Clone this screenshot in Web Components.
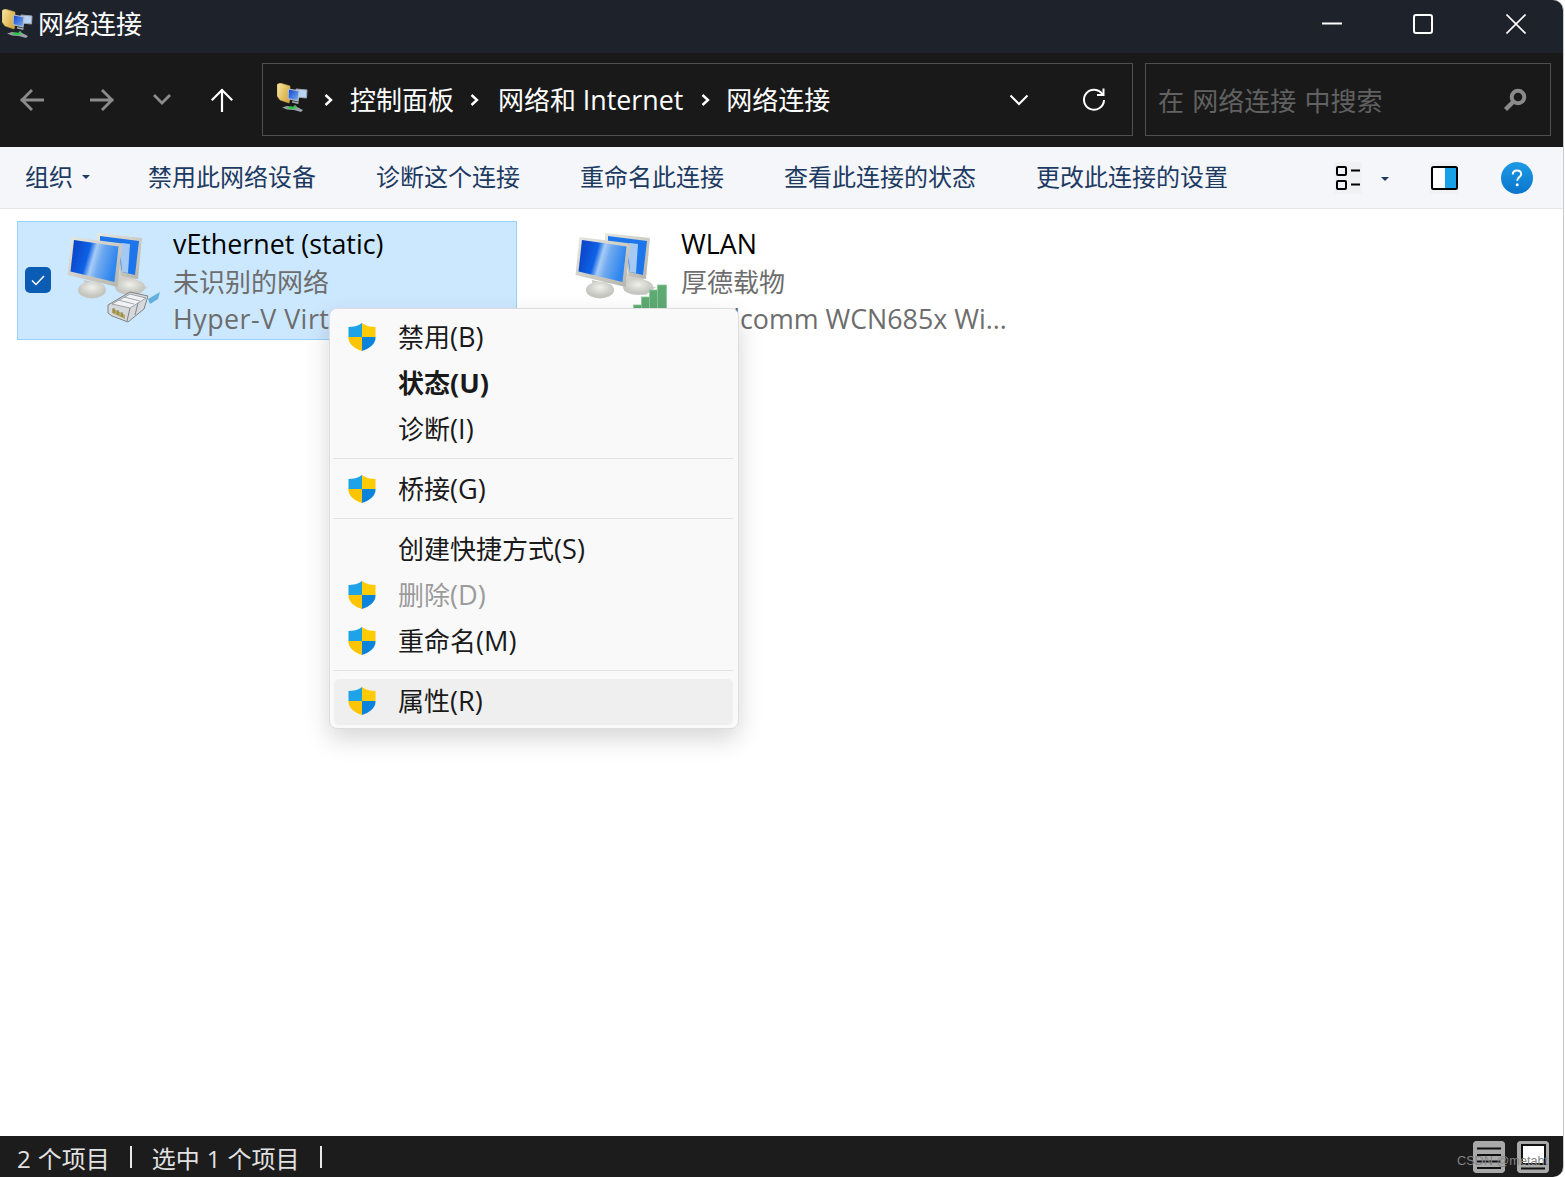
<!DOCTYPE html>
<html lang="zh-CN">
<head>
<meta charset="utf-8">
<title>网络连接</title>
<style>
html,body{margin:0;padding:0;background:#fff;height:100%;overflow:hidden}
body{font-family:"Open Sans","Noto Sans CJK SC",sans-serif}
</style>
</head>
<body>
<explorer-window>
  <title-bar slot="title"></title-bar>
  <nav-bar slot="nav"></nav-bar>
  <tool-bar slot="tools"></tool-bar>
  <file-area slot="files">
    <net-item name="vEthernet (static)" status="未识别的网络" device="Hyper-V Virtual Ethernet Adapter" selected kind="wired"></net-item>
    <net-item name="WLAN" status="厚德载物" device="Qualcomm WCN685x Wi..." kind="wifi"></net-item>
  </file-area>
  <status-bar slot="status"></status-bar>
  <context-menu slot="menu">
    <menu-row shield label="禁用" key="(B)"></menu-row>
    <menu-row bold label="状态" key="(U)"></menu-row>
    <menu-row label="诊断" key="(I)"></menu-row>
    <menu-sep></menu-sep>
    <menu-row shield label="桥接" key="(G)"></menu-row>
    <menu-sep></menu-sep>
    <menu-row label="创建快捷方式" key="(S)"></menu-row>
    <menu-row shield disabled label="删除" key="(D)"></menu-row>
    <menu-row shield label="重命名" key="(M)"></menu-row>
    <menu-sep></menu-sep>
    <menu-row shield active label="属性" key="(R)"></menu-row>
  </context-menu>
</explorer-window>
<script>
const FONT='"Open Sans","Noto Sans CJK SC",sans-serif';
function def(name,html){
  customElements.define(name,class extends HTMLElement{
    constructor(){super();this.attachShadow({mode:'open'})}
    connectedCallback(){this.shadowRoot.innerHTML=typeof html==='function'?html(this):html}
  });
}
def('explorer-window',`<style>
:host{display:flex;flex-direction:column;position:relative;width:1563px;height:1177px;overflow:hidden;border-radius:0 10px 10px 0;box-shadow:1px 0 0 #c9c9c9;font-family:${FONT}}
main{flex:1;min-height:0;display:flex;flex-direction:column}
</style><slot name="title"></slot><slot name="nav"></slot><slot name="tools"></slot><main><slot name="files"></slot></main><slot name="status"></slot><slot name="menu"></slot>`);

def('cp-icon',`<style>:host{display:block;width:31px;height:30px}svg{display:block}</style>
<svg width="31" height="30" viewBox="0 0 31 30">
<defs><linearGradient id="f" x1="0" x2="1" y1="0" y2=".6"><stop offset="0" stop-color="#f8e9a6"/><stop offset="1" stop-color="#d8a93e"/></linearGradient>
<linearGradient id="s" x1="0" x2="1" y1="0" y2="1"><stop offset="0" stop-color="#0b3fd0"/><stop offset="1" stop-color="#7cb4f0"/></linearGradient></defs>
<path d="M0 1.500 3 0 13 3V16L12 20 3 17 0 13Z" fill="url(#f)" stroke="#c9a550" stroke-width=".6"/>
<path d="M19 6 30 7 29.500 15 19 14Z" fill="#b9d4f2" stroke="#9aa4b0"/>
<path d="M11.500 6 22 8 21 18 11 15.500Z" fill="url(#s)" stroke="#b7bec6" stroke-width="1.200"/>
<path d="M15 18 22 19.500 21 21 15 19.500Z" fill="#a9b0b8"/>
<path d="M5 24.500 10 23 16 24 18 22 20 24 26 27 24 29 17 27 10 26.500Z" fill="#9aa2a8"/>
<path d="M9 24.800 14 23.500 17 24 19 22.300 19.500 25 15 26.300Z" fill="#27c93f"/>
</svg>`);

def('title-bar',`<style>
:host{display:flex;align-items:center;height:53px;background:#1e222b;color:#fff;font-size:26px;flex:none}
.ic{margin:-6px 5px 0 2px;display:flex}
.t{flex:1;line-height:53px;margin-top:-5px}
.b{width:20px;height:20px;display:block;flex:none;margin-top:-5px}
svg{display:block;fill:none;stroke:#fff}
.gap1{margin-right:71px}.gap2{margin-right:73px}.gap3{margin-right:37px}
</style>
<div class="ic"><cp-icon></cp-icon></div><div class="t">网络连接</div>
<svg class="b gap1" viewBox="0 0 20 20"><path d="M0 9.500H20" stroke-width="2"/></svg>
<svg class="b gap2" viewBox="0 0 20 20"><rect x="1" y="1" width="18" height="18" rx="2" stroke-width="2"/></svg>
<svg class="b gap3" viewBox="0 0 20 20"><path d="M.5 .5 19.500 19.500M19.500 .5 .5 19.500" stroke-width="1.600"/></svg>`);

def('nav-bar',`<style>
:host{display:flex;height:94px;box-sizing:border-box;padding:10px 12px 11px 0;background:#191919;flex:none;align-items:stretch;color:#fff;font-size:26px}
.arrows{width:262px;position:relative;display:flex;align-items:center;flex:none}
.arrows svg{display:block;flex:none;fill:none;stroke-linecap:square}
.addr{width:871px;box-sizing:border-box;border:1px solid #4f4f4f;display:flex;align-items:center;padding-left:14px;flex:none}
.addr cp-icon{margin-top:-4px}
.addr span{white-space:nowrap;line-height:30px}
.lat{font-size:26.800px}
.chev{display:block;fill:none;stroke:#fff;flex:none}
.search{width:406px;margin-left:12px;box-sizing:border-box;border:1px solid #4f4f4f;display:flex;align-items:center;padding:0 23px 0 13px;color:#616161}
.search span{flex:1;word-spacing:1.500px;margin-left:-1px}
</style>
<div class="arrows">
<svg width="24" height="22" viewBox="0 0 24 22" style="margin-left:20px" stroke="#8c8c8c" stroke-width="2.800"><path d="M23 11H2M11 2 2 11 11 20"/></svg>
<svg width="24" height="22" viewBox="0 0 24 22" style="margin-left:46px" stroke="#8c8c8c" stroke-width="2.800"><path d="M1 11H22M13 2 22 11 13 20"/></svg>
<svg width="18" height="12" viewBox="0 0 18 12" style="margin-left:39px" stroke="#8c8c8c" stroke-width="2.800"><path d="M2 2 9 9 16 2"/></svg>
<svg width="22" height="24" viewBox="0 0 22 24" style="margin-left:40px" stroke="#fff" stroke-width="2.200"><path d="M11 23V2M1.500 11.500 11 2 20.500 11.500"/></svg>
</div>
<div class="addr">
<cp-icon></cp-icon>
<svg class="chev" width="9" height="14" viewBox="0 0 9 14" style="margin:0 17px 0 16px" stroke-width="2.400"><path d="M1.500 2 7 7 1.500 12"/></svg>
<span>控制面板</span>
<svg class="chev" width="9" height="14" viewBox="0 0 9 14" style="margin:0 19px 0 16px" stroke-width="2.400"><path d="M1.500 2 7 7 1.500 12"/></svg>
<span>网络和 <span class="lat">Internet</span></span>
<svg class="chev" width="9" height="14" viewBox="0 0 9 14" style="margin:0 16px 0 18px" stroke-width="2.400"><path d="M1.500 2 7 7 1.500 12"/></svg>
<span style="flex:1">网络连接</span>
<svg class="chev" width="20" height="12" viewBox="0 0 20 12" style="margin-right:52px" stroke-width="2"><path d="M1.500 1.500 10 10 18.500 1.500"/></svg>
<svg class="chev" width="26" height="26" viewBox="0 0 26 26" style="margin-right:25px" stroke-width="2"><path d="M21.500 7.500A10 10 0 1 0 23 13"/><path d="M22.500 1.500V8H16"/></svg>
</div>
<div class="search"><span>在 网络连接 中搜索</span>
<svg width="24" height="24" viewBox="0 0 24 24"><circle cx="15" cy="9" r="6.300" fill="none" stroke="#8a8a8a" stroke-width="4"/><path d="M10.500 13.500 2.500 21.500" stroke="#8a8a8a" stroke-width="4.400" fill="none"/></svg></div>`);

def('tool-bar',`<style>
:host{display:flex;align-items:center;height:62px;box-sizing:border-box;background:#f4f6f9;border-bottom:1px solid #e6e6e6;color:#1d3a62;font-size:24px;padding-left:25px;flex:none}
.i{margin-right:60px;white-space:nowrap;margin-top:-4px}
.org{display:flex;align-items:center;margin-right:58px;margin-top:-4px}
.tri{width:0;height:0;border:4px solid transparent;border-top:4px solid #1d3a62;border-bottom:0;margin-left:9px;margin-top:2px;flex:none}
.sp{flex:1}
svg{display:block;flex:none}
.tile{width:28px;height:32px;background:#f0f1f3;border-radius:3px;display:flex;align-items:center;justify-content:center}
</style>
<div class="org">组织<i class="tri"></i></div>
<div class="i">禁用此网络设备</div><div class="i">诊断这个连接</div><div class="i">重命名此连接</div><div class="i">查看此连接的状态</div><div class="i">更改此连接的设置</div>
<div class="sp"></div>
<div class="tile" style="margin-right:19px"><svg width="26" height="26" viewBox="0 0 26 26" fill="none" stroke="#000" stroke-width="2"><rect x="2" y="2" width="9" height="8" rx="1"/><rect x="2" y="16" width="9" height="8" rx="1"/><path d="M16 5.500H25M16 19.500H25"/></svg></div>
<i class="tri" style="margin:2px 41px 0 0"></i>
<div class="tile" style="margin-right:43px"><svg width="27" height="24" viewBox="0 0 27 24"><rect x="1" y="1" width="25" height="22" rx="1.500" fill="#fff" stroke="#000" stroke-width="2"/><rect x="14" y="2" width="11" height="20" fill="#1aa0e6"/></svg></div>
<svg style="margin-right:30px" width="32" height="32" viewBox="0 0 32 32"><defs><linearGradient id="h" x1="0" y1="0" x2="0" y2="1"><stop offset="0" stop-color="#1c9be6"/><stop offset="1" stop-color="#0a74cc"/></linearGradient></defs><circle cx="16" cy="16" r="16" fill="url(#h)"/><path d="M11.800 12.500C11.800 9.800 13.700 8.500 16 8.500 18.400 8.500 20.200 9.900 20.200 12.200 20.200 15 16.200 15.300 16.200 18.700" fill="none" stroke="#fff" stroke-width="2"/><circle cx="16.200" cy="22.800" r="1.500" fill="#fff"/></svg>`);

def('file-area',`<style>:host{display:flex;gap:8px;flex:1;background:#fff;padding:12px 17px;align-items:flex-start;min-height:0}</style><slot></slot>`);

def('net-icon',h=>{
const wifi=h.getAttribute('kind')==='wifi';
return `<style>:host{display:block;width:96px;height:96px}svg{display:block}</style>
<svg width="96" height="96" viewBox="6 5 96 96">
<defs>
<linearGradient id="sc" x1="0" y1="0" x2="1" y2=".25"><stop offset="0" stop-color="#0a3cc0"/><stop offset=".42" stop-color="#0f62e6"/><stop offset=".55" stop-color="#a6ccf6"/><stop offset=".7" stop-color="#6ea8ef"/><stop offset="1" stop-color="#2f87ef"/></linearGradient>
<linearGradient id="bz" x1="0" y1="0" x2="1" y2="1"><stop offset="0" stop-color="#e8e7e0"/><stop offset="1" stop-color="#b5b4ac"/></linearGradient>
<radialGradient id="st" cx=".5" cy=".35"><stop offset="0" stop-color="#f0f0ec"/><stop offset="1" stop-color="#c6c6c0"/></radialGradient>
<filter id="soft" x="-5%" y="-5%" width="110%" height="110%"><feGaussianBlur stdDeviation=".7"/></filter>
</defs>
<g filter="url(#soft)">
<path d="M60 45 76 49 75 60 88 62 78 70 56 66Z" fill="#d0cfc9"/>
<ellipse cx="70" cy="62" rx="15" ry="8" fill="url(#st)"/>
<path d="M37 8 82 13 78 54 61 51 57 26 37 20Z" fill="url(#bz)"/>
<path d="M40 11 79 16 75 50 62 47 58 24 40 19Z" fill="#1d74ea"/>
<path d="M62 18 70 19 68 48 62 47 60 24Z" fill="#a4c9f5"/>
<path d="M24 55 44 60 43 68 25 63Z" fill="#c8c7c0"/>
<ellipse cx="32" cy="65" rx="14" ry="8.500" fill="url(#st)"/>
<path d="M11.500 12 62.500 18.500 57.500 62 7.500 50Z" fill="url(#bz)"/>
<path d="M14 15 58.500 21.500 54.500 57 10.500 46.500Z" fill="url(#sc)"/>
${wifi?``:`
<path d="M88 74 100 67 98 74 90 79Z" fill="#63aedb"/>
<path d="M48 80 70 67 88 71 84 84 68 97 52 91 48 88Z" fill="#d5d9dc" stroke="#7f8386" stroke-width="1"/>
<path d="M70 69 86 73 70 83 52 79Z" fill="#f0f2f4" stroke="#8f9295" stroke-width=".8"/>
<path d="M58 75 74 79M64 72 80 76" stroke="#a4a8ab" fill="none" stroke-width="1"/>
<path d="M52 83 60 87 65 90 65 94 52 88Z" fill="#b5a75a"/>
<path d="M54 83V88M58 85V90M62 87V92" stroke="#6f6c55" fill="none" stroke-width=".8"/>
<path d="M70 83 67 96M78 78 75 90" stroke="#7f8386" fill="none"/>`}
</g>
${wifi?`<g fill="#5eaa73" stroke="#8cc79c" stroke-width=".8"><rect x="65.500" y="80" width="8" height="25"/><rect x="73.500" y="72" width="8" height="33"/><rect x="81.500" y="65" width="8" height="40"/><rect x="89.500" y="60" width="9" height="45"/></g>`:``}
</svg>`});

def('net-item',h=>{
const sel=h.hasAttribute('selected');
return `<style>
:host{display:block;width:500px;height:119px;box-sizing:border-box;flex:none;border:1px solid ${sel?'#99d1ff':'transparent'};background:${sel?'#cce8ff':'transparent'};font-size:26px}
.r{display:flex;height:100%;padding-left:7px;box-sizing:border-box;align-items:flex-start}
.cb{width:26px;height:26px;border-radius:5px;background:#0a5cb5;margin:45px 15px 0 0;flex:none;visibility:${sel?'visible':'hidden'}}
.cb svg{display:block}
net-icon{margin:8px 11px 0 0;flex:none}
.tx{min-width:0;flex:1;padding-top:3px}
.tx div{white-space:nowrap;overflow:hidden;color:#6d6d6d;line-height:38px}
.tx .n{color:#000;font-size:26.800px}
.tx .d{font-size:26.800px;line-height:35px;letter-spacing:${sel?'.5px':'0'}}
</style><div class="r"><div class="cb"><svg width="26" height="26" viewBox="0 0 26 26"><path d="M7 13.500 11 17.500 19 9" fill="none" stroke="#fff" stroke-width="1.500"/></svg></div>
<net-icon kind="${h.getAttribute('kind')}"></net-icon>
<div class="tx"><div class="n">${h.getAttribute('name')}</div><div>${h.getAttribute('status')}</div><div class="d">${h.getAttribute('device')}</div></div></div>`});

def('shield-icon',`<style>:host{display:block;width:28px;height:28px}svg{display:block}</style>
<svg width="28" height="28" viewBox="0 0 28 28"><defs><clipPath id="c"><path d="M14 0C10 3 5 4 .5 4V15C.5 21 7 26 14 28 21 26 27.500 21 27.500 15V4C23 4 18 3 14 0Z"/></clipPath></defs>
<g clip-path="url(#c)"><rect width="14" height="14" fill="#1fa3e8"/><rect x="14" width="14" height="14" fill="#ffcb05"/><rect y="14" width="14" height="14" fill="#ffc400"/><rect x="14" y="14" width="14" height="14" fill="#0b83db"/></g></svg>`);

def('context-menu',`<style>
:host{position:absolute;left:329px;top:308px;width:410px;height:421px;box-sizing:border-box;padding:6px 5px 0 4px;background:#f9f9f9;border-radius:8px;border:1px solid #dedede;box-shadow:0 10px 24px rgba(0,0,0,.16);color:#1a1a1a;font-size:26px}
</style><slot></slot>`);

def('menu-row',h=>`<style>
:host{display:flex;align-items:center;height:46px;border-radius:5px;background:${h.hasAttribute('active')?'#efefef':'transparent'};color:${h.hasAttribute('disabled')?'#9b9b9b':'#1a1a1a'};font-weight:${h.hasAttribute('bold')?700:400}}
.ic{width:28px;height:28px;margin:-3px 22px 0 14px;flex:none}
span{margin-top:-5px;white-space:nowrap}
b{font-size:27.200px;font-weight:inherit}
</style><div class="ic">${h.hasAttribute('shield')?'<shield-icon></shield-icon>':''}</div><span>${h.getAttribute('label')}<b>${h.getAttribute('key')}</b></span>`);

def('menu-sep',`<style>:host{display:block;height:1px;background:#e3e3e3;margin:5px 0 8px -1px}</style>`);

def('status-bar',`<style>
:host{display:flex;align-items:center;position:relative;height:41px;background:#1c1c1c;color:#e2e2e2;font-size:24px;padding-left:17px;flex:none;box-sizing:border-box;white-space:nowrap}
.t{margin-top:2px;word-spacing:.800px}
.bar{width:2px;height:22px;background:#e8e8e8;margin:0 20px 0 20px;flex:none}
.sp{flex:1}
.b{width:32px;height:32px;border-radius:4px;background:#a9a9a9;flex:none;display:block}
.wm{position:absolute;left:1457px;top:15px;font-size:12.700px;line-height:20px;color:#838383;font-family:"Liberation Sans",sans-serif}
</style><span class="t">2 个项目</span><i class="bar"></i><span class="t">选中 1 个项目</span><i class="bar"></i><div class="sp"></div>
<svg class="b" viewBox="0 0 32 32" style="margin-right:12px"><rect width="32" height="32" rx="4" fill="#a9a9a9"/><path d="M4 7.500H28M4 14H28M4 20.500H28M4 27H28" stroke="#111" stroke-width="2"/></svg>
<svg class="b" viewBox="0 0 32 32" style="margin-right:14px"><rect width="32" height="32" rx="4" fill="#a9a9a9"/><rect x="5" y="4" width="23" height="19" fill="#fff" stroke="#111" stroke-width="2"/><path d="M4 27.500H28" stroke="#111" stroke-width="2"/></svg>
<span class="wm">CSDN @metaht</span>`);
</script>
</body>
</html>
